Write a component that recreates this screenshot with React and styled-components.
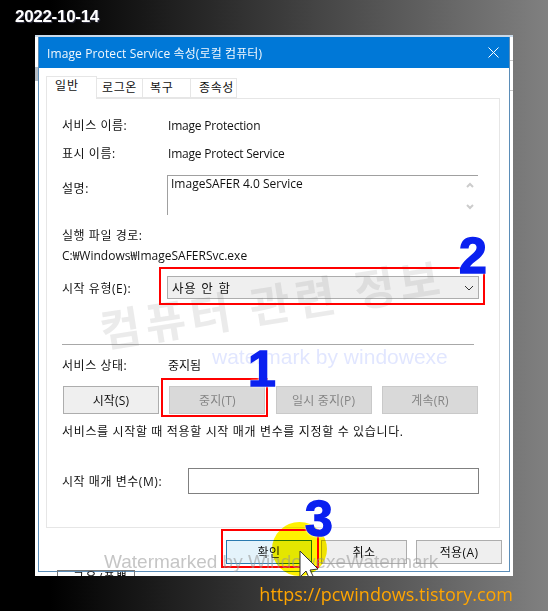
import React from 'react'
import styled, { createGlobalStyle } from 'styled-components'

const Global = createGlobalStyle`
  html, body { margin: 0; padding: 0; }
  body { width: 548px; height: 611px; overflow: hidden; }
`

const KR = `"Noto Sans CJK KR", "Noto Sans", sans-serif`

const Page = styled.div`
  position: relative;
  width: 548px;
  height: 611px;
  overflow: hidden;
  background: linear-gradient(90deg, #000 0, #000 50px, #808080 100%);
  font-family: "Open Sans", ${KR};
  font-size: 12px;
  color: #111;
`

const DateText = styled.div`
  height: 35px;
  padding: 5px 0 0 15px;
  box-sizing: border-box;
  font: bold 17px/24px "Liberation Sans", sans-serif;
  letter-spacing: -0.3px;
  color: #fff;
  text-shadow: 1px 1px 1px #334;
`

const Backdrop = styled.div`
  position: relative;
  width: 478px;
  height: 541px;
  margin-left: 35px;
  padding: 0 3px;
  box-sizing: border-box;
  background: #fff;
  border-top: 2px solid #c9d9e9;
  overflow: hidden;
`

const Dialog = styled.div`
  width: 472px;
  height: 535px;
  box-sizing: border-box;
  border: 1px solid #5b8db8;
  border-top: 0;
  background: #fff;
  display: flex;
  flex-direction: column;
`

const TitleBar = styled.div`
  height: 31px;
  flex: none;
  background: #0078d7;
  color: #f2f8fd;
  display: flex;
  align-items: center;
  justify-content: space-between;
  padding: 0 10px 0 8px;
  font-size: 12px;
  letter-spacing: 0.12px;
`

const Tabs = styled.div`
  display: flex;
  align-items: flex-end;
  height: 30px;
  flex: none;
  margin-left: 7px;
`

const Tab = styled.div`
  width: ${p => p.$w}px;
  height: ${p => (p.$active ? 23 : 20)}px;
  box-sizing: border-box;
  border: 1px solid #e6e6e6;
  border-bottom: ${p => (p.$active ? '0' : '1px solid #e6e6e6')};
  border-left-width: ${p => (p.$active ? 1 : 0)}px;
  background: #fff;
  font-size: 12px;
  line-height: 18px;
  letter-spacing: ${p => (p.$active ? 1 : 0.6)}px;
  padding-left: ${p => p.$pad}px;
  white-space: nowrap;
  margin-bottom: ${p => (p.$active ? -1 : 0)}px;
  position: ${p => (p.$active ? 'relative' : 'static')};
  z-index: 1;
`

const Panel = styled.div`
  width: 454px;
  height: 430px;
  margin-left: 7px;
  flex: none;
  box-sizing: border-box;
  border: 1px solid #e6e6e6;
  padding: 16px 15px 0;
  display: flex;
  flex-direction: column;
`

const InfoRow = styled.div`
  display: flex;
  align-items: center;
  height: 20px;
  margin-bottom: ${p => p.$mb ?? 8}px;
  white-space: nowrap;
`

const Label = styled.div`
  width: ${p => p.$w ?? 106}px;
  flex: none;
  letter-spacing: 0.55px;
  white-space: nowrap;
`

const Value = styled.span`
  letter-spacing: -0.2px;
`

const DescRow = styled.div`
  display: flex;
  height: 40px;
  margin-bottom: 10px;
  & > ${Label} { line-height: 28px; }
`

const DescBox = styled.div`
  width: 311px;
  height: 40px;
  margin-left: -1px;
  box-sizing: border-box;
  border-top: 1px solid #a0a0a0;
  border-left: 1px solid #a0a0a0;
  padding-left: 3px;
  line-height: 15px;
  display: flex;
  justify-content: space-between;
`

const Arrows = styled.div`
  width: 16px;
  height: 28px;
  display: flex;
  flex-direction: column;
  justify-content: space-between;
  align-items: center;
  margin-top: 6px;
`

const StartRow = styled.div`
  display: flex;
  align-items: center;
  height: 23px;
  margin-top: 11px;
`

const Select = styled.div`
  width: 312px;
  height: 23px;
  margin-left: -1px;
  box-sizing: border-box;
  background: #efefef;
  border: 1px solid #adadad;
  display: flex;
  align-items: center;
  justify-content: space-between;
  padding: 0 4px 0 4px;
  font-size: 12.5px;
  letter-spacing: 0.7px;
  word-spacing: 1px;
`

const Divider = styled.div`
  height: 1px;
  width: 412px;
  background: #a8a8a8;
  margin: 45px 0 10px;
`

const Buttons = styled.div`
  display: flex;
  justify-content: space-between;
  width: 415px;
  margin: 11px 0 8px 1px;
`

const ServiceButton = styled.div`
  width: 96px;
  height: 28px;
  box-sizing: border-box;
  border: 1px solid ${p => (p.disabled ? '#c9c9c9' : '#adadad')};
  background: ${p => (p.disabled ? '#d9d9d9' : '#efefef')};
  color: ${p => (p.disabled ? '#858585' : '#111')};
  display: flex;
  align-items: center;
  justify-content: center;
  letter-spacing: 0.2px;
`

const Hint = styled.div`
  height: 20px;
  line-height: 20px;
  letter-spacing: 0.65px;
  white-space: nowrap;
`

const ParamRow = styled.div`
  display: flex;
  align-items: center;
  margin-top: 26px;
`

const ParamInput = styled.div`
  width: 291px;
  height: 26px;
  box-sizing: border-box;
  border: 1px solid #808080;
`

const Footer = styled.div`
  display: flex;
  justify-content: flex-end;
  gap: 9px;
  padding: 12px 7px 0 0;
`

const DialogButton = styled.div`
  width: 86px;
  height: 24px;
  box-sizing: border-box;
  border: 1px solid ${p => (p.$primary ? '#2a7ab0' : '#adadad')};
  background: ${p => (p.$primary ? '#e4f3fb' : '#efefef')};
  display: flex;
  align-items: center;
  justify-content: center;
  letter-spacing: 0.4px;
`

const Url = styled.div`
  height: 35px;
  padding: 6px 35px 0 0;
  box-sizing: border-box;
  text-align: right;
  font: 18px/24px "Open Sans", sans-serif;
  color: #ffa500;
  white-space: nowrap;
`

const PeekLine = styled.div`
  position: absolute;
  right: 0;
  top: ${p => p.$y}px;
  width: 3px;
  height: 1px;
  background: #c8c8c8;
`

const PeekBlock = styled.div`
  position: absolute;
  left: 0;
  top: 30px;
  width: 3px;
  height: 14px;
  background: #b4bcc4;
`

const PeekText = styled.div`
  position: absolute;
  left: 22px;
  bottom: -10px;
  height: 14px;
  padding: 0 5px 0 15px;
  border: 1px solid #777;
  font-size: 12px;
  line-height: 14px;
  letter-spacing: 1.4px;
  white-space: nowrap;
`

const RedBox = styled.div`
  position: absolute;
  box-sizing: border-box;
  border: 2px solid #f00;
  left: ${p => p.$x}px;
  top: ${p => p.$y}px;
  width: ${p => p.$w}px;
  height: ${p => p.$h}px;
`

const Step = styled.div`
  position: absolute;
  left: ${p => p.$x}px;
  top: ${p => p.$y}px;
  font: bold 50px/50px "Liberation Sans", sans-serif;
  color: #0a20f0;
  -webkit-text-stroke: 1.5px #0a20f0;
  text-shadow: 0 0 3px #fff, 0 0 3px #fff, 0 0 2px #fff;
`

const Mark = styled.div`
  position: absolute;
  left: ${p => p.$x}px;
  top: ${p => p.$y}px;
  white-space: nowrap;
  pointer-events: none;
`

const BigMark = styled(Mark)`
  font: bold 44px/44px ${KR};
  color: rgba(120, 120, 120, 0.15);
  transform: rotate(-9deg);
  transform-origin: left center;
  letter-spacing: 5px;
`

const BlueMark = styled(Mark)`
  font: 21px/22px "Liberation Sans", sans-serif;
  color: rgba(70, 100, 255, 0.16);
`

const GreyMark = styled(Mark)`
  font: 19px/20px "Liberation Sans", sans-serif;
  color: rgba(150, 150, 150, 0.55);
`

const Highlight = styled.div`
  position: absolute;
  left: 272px;
  top: 522px;
  width: 55px;
  height: 54px;
  border-radius: 50%;
  background: #fff200;
  mix-blend-mode: multiply;
`

const Cursor = styled.svg`
  position: absolute;
  left: 299px;
  top: 550px;
`

export default function App() {
  return (
    <Page>
      <Global />
      <DateText>2022-10-14</DateText>
      <Backdrop>
        <Dialog>
          <TitleBar>
            <span>Image Protect Service 속성(로컬 컴퓨터)</span>
            <svg width="11" height="11" viewBox="0 0 11 11">
              <path d="M0.5 0.5L10.5 10.5M10.5 0.5L0.5 10.5" stroke="#fff" fill="none" />
            </svg>
          </TitleBar>
          <Tabs>
            <Tab $w={51} $pad={8} $active>일반</Tab>
            <Tab $w={46} $pad={5}>로그온</Tab>
            <Tab $w={48} $pad={7}>복구</Tab>
            <Tab $w={46} $pad={8}>종속성</Tab>
          </Tabs>
          <Panel>
            <InfoRow $mb={8}><Label>서비스 이름:</Label><Value>Image Protection</Value></InfoRow>
            <InfoRow $mb={12}><Label>표시 이름:</Label><Value>Image Protect Service</Value></InfoRow>
            <DescRow>
              <Label>설명:</Label>
              <DescBox>
                ImageSAFER 4.0 Service
                <Arrows>
                  <svg width="8" height="6" viewBox="0 0 8 6"><path d="M1 5L4 2L7 5" stroke="#ccc" strokeWidth="2" fill="none" /></svg>
                  <svg width="8" height="6" viewBox="0 0 8 6"><path d="M1 1L4 4L7 1" stroke="#ccc" strokeWidth="2" fill="none" /></svg>
                </Arrows>
              </DescBox>
            </DescRow>
            <InfoRow $mb={0}><Label>실행 파일 경로:</Label></InfoRow>
            <InfoRow $mb={0}>C:₩Windows₩ImageSAFERSvc.exe</InfoRow>
            <StartRow>
              <Label>시작 유형(E):</Label>
              <Select>
                사용 안 함
                <svg width="10" height="6" viewBox="0 0 10 6"><path d="M1 1L5 5L9 1" stroke="#333" strokeWidth="1" fill="none" /></svg>
              </Select>
            </StartRow>
            <Divider />
            <InfoRow $mb={0}><Label>서비스 상태:</Label>중지됨</InfoRow>
            <Buttons>
              <ServiceButton>시작(S)</ServiceButton>
              <ServiceButton disabled>중지(T)</ServiceButton>
              <ServiceButton disabled>일시 중지(P)</ServiceButton>
              <ServiceButton disabled>계속(R)</ServiceButton>
            </Buttons>
            <Hint>서비스를 시작할 때 적용할 시작 매개 변수를 지정할 수 있습니다.</Hint>
            <ParamRow>
              <Label $w={126}>시작 매개 변수(M):</Label>
              <ParamInput />
            </ParamRow>
          </Panel>
          <Footer>
            <DialogButton $primary>확인</DialogButton>
            <DialogButton>취소</DialogButton>
            <DialogButton>적용(A)</DialogButton>
          </Footer>
        </Dialog>
        <PeekLine $y={23} />
        <PeekLine $y={53} />
        <PeekBlock />
        <PeekText>구용/폭뽁</PeekText>
      </Backdrop>
      <Url>https://pcwindows.tistory.com</Url>

      <BigMark $x={100} $y={307}>컴퓨터 관련 정보</BigMark>
      <BlueMark $x={212} $y={346}>watermark by windowexe</BlueMark>
      <RedBox $x={159} $y={267} $w={326} $h={38} />
      <RedBox $x={161} $y={378} $w={107} $h={39} />
      <RedBox $x={221} $y={529} $w={98} $h={39} />
      <Highlight />
      <GreyMark $x={104} $y={552}>Watermarked by WindowexeWatermark</GreyMark>
      <Step $x={459} $y={231}>2</Step>
      <Step $x={248} $y={344}>1</Step>
      <Step $x={305} $y={494}>3</Step>
      <Cursor width="20" height="26" viewBox="0 0 20 26">
        <path d="M1 1L1 27L7 21L11 30L15 28L11 20L19 19Z" fill="#fff" stroke="#333" strokeWidth="1" />
      </Cursor>
    </Page>
  )
}
